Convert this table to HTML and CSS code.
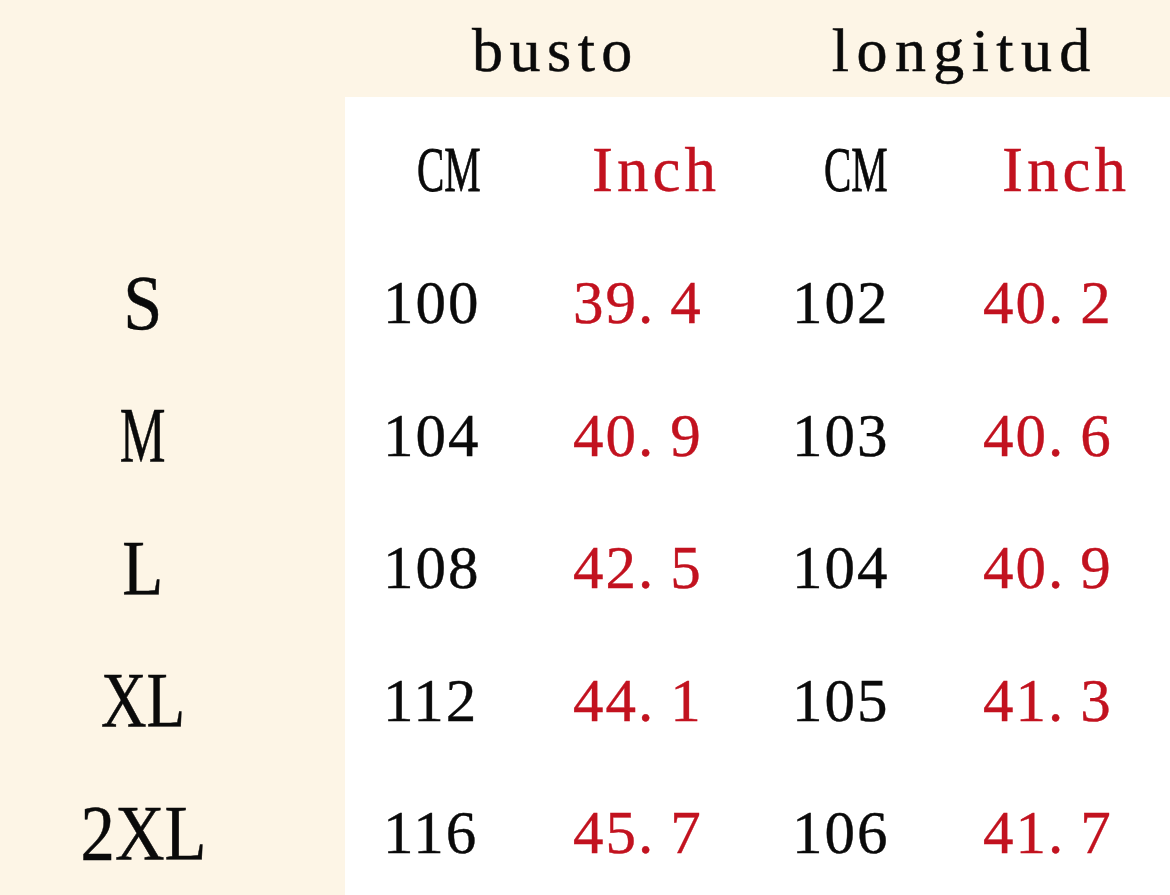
FILE: index.html
```html
<!DOCTYPE html>
<html lang="es">
<head>
<meta charset="utf-8">
<title>Tabla de tallas</title>
<link rel="stylesheet" href="styles.css">
</head>
<body>
<div class="sheet">
  <header class="heads">
    <span class="head head-busto">busto</span>
    <span class="head">longitud</span>
  </header>
  <main class="body">
    <div class="sizes">
      <div class="row"></div>
      <div class="row"><span class="size">S</span></div>
      <div class="row"><span class="size size-m">M</span></div>
      <div class="row"><span class="size size-l">L</span></div>
      <div class="row"><span class="size size-xl">XL</span></div>
      <div class="row"><span class="size size-2xl">2XL</span></div>
    </div>
    <div class="panel">
      <div class="cell"><span class="unit unit-cm">CM</span></div>
      <div class="cell"><span class="unit unit-in red">Inch</span></div>
      <div class="cell"><span class="unit unit-cm unit-cm2">CM</span></div>
      <div class="cell"><span class="unit unit-in red">Inch</span></div>

      <div class="cell num">100</div>
      <div class="cell num red">39<span class="dot">.</span>4</div>
      <div class="cell num">102</div>
      <div class="cell num red">40<span class="dot">.</span>2</div>

      <div class="cell num">104</div>
      <div class="cell num red">40<span class="dot">.</span>9</div>
      <div class="cell num">103</div>
      <div class="cell num red">40<span class="dot">.</span>6</div>

      <div class="cell num">108</div>
      <div class="cell num red">42<span class="dot">.</span>5</div>
      <div class="cell num">104</div>
      <div class="cell num red">40<span class="dot">.</span>9</div>

      <div class="cell num">112</div>
      <div class="cell num red">44<span class="dot">.</span>1</div>
      <div class="cell num">105</div>
      <div class="cell num red">41<span class="dot">.</span>3</div>

      <div class="cell num">116</div>
      <div class="cell num red">45<span class="dot">.</span>7</div>
      <div class="cell num">106</div>
      <div class="cell num red">41<span class="dot">.</span>7</div>
    </div>
  </main>
</div>
</body>
</html>
```

FILE: styles.css
```css
html, body {
  margin: 0;
  padding: 0;
}

body {
  background: #fdf5e6;
  font-family: "Liberation Serif", "Times New Roman", serif;
  color: #0a0a0a;
}

.sheet {
  width: 1170px;
  height: 895px;
  display: flex;
  flex-direction: column;
  overflow: hidden;
}

.heads {
  flex: 0 0 97px;
  height: 97px;
  box-sizing: border-box;
  padding: 19px 0 0 472px;
  display: flex;
  align-items: flex-start;
  gap: 189px;
}

.head {
  font-size: 62px;
  line-height: 1;
  letter-spacing: 6.5px;
  -webkit-text-stroke: 0.5px currentColor;
}

.head-busto {
  letter-spacing: 6.5px;
}

.head + .head {
  letter-spacing: 7.4px;
  margin-left: 4px;
}

.body {
  flex: 1 1 auto;
  min-height: 0;
  display: flex;
  overflow: hidden;
}

.sizes {
  width: 345px;
  flex: 0 0 345px;
  box-sizing: border-box;
  padding: 7px 59px 0 0;
  display: grid;
  grid-auto-rows: 132.5px;
}

.row {
  display: flex;
  align-items: center;
  justify-content: center;
}

.size {
  display: inline-block;
  font-size: 78px;
  line-height: 1;
  transform: scaleX(0.9);
  -webkit-text-stroke: 0.5px currentColor;
}

.size-m { transform: scaleX(0.66); }
.size-l { transform: scaleX(0.86); }
.size-xl { transform: scaleX(0.81); }
.size-2xl { transform: scaleX(0.88); }

.panel {
  flex: 1;
  background: #ffffff;
  box-sizing: border-box;
  padding: 7px 0 0 38px;
  display: grid;
  grid-template-columns: 190px 219px 191px 1fr;
  grid-auto-rows: 132.5px;
}

.cell {
  display: flex;
  align-items: center;
}

.num {
  font-size: 61px;
  line-height: 1;
  letter-spacing: 2px;
  -webkit-text-stroke: 0.4px currentColor;
}

.dot {
  letter-spacing: 17px;
}

.red {
  color: #c2121f;
}

.unit {
  display: inline-block;
  font-size: 63px;
  line-height: 1;
  transform-origin: left center;
  -webkit-text-stroke: 0.4px currentColor;
}

.unit-cm {
  margin-left: 34px;
  transform: scaleX(0.65);
  -webkit-text-stroke: 0.8px currentColor;
}

.unit-cm2 {
  margin-left: 32px;
}

.unit-in {
  margin-left: 19px;
  letter-spacing: 4px;
}
```
